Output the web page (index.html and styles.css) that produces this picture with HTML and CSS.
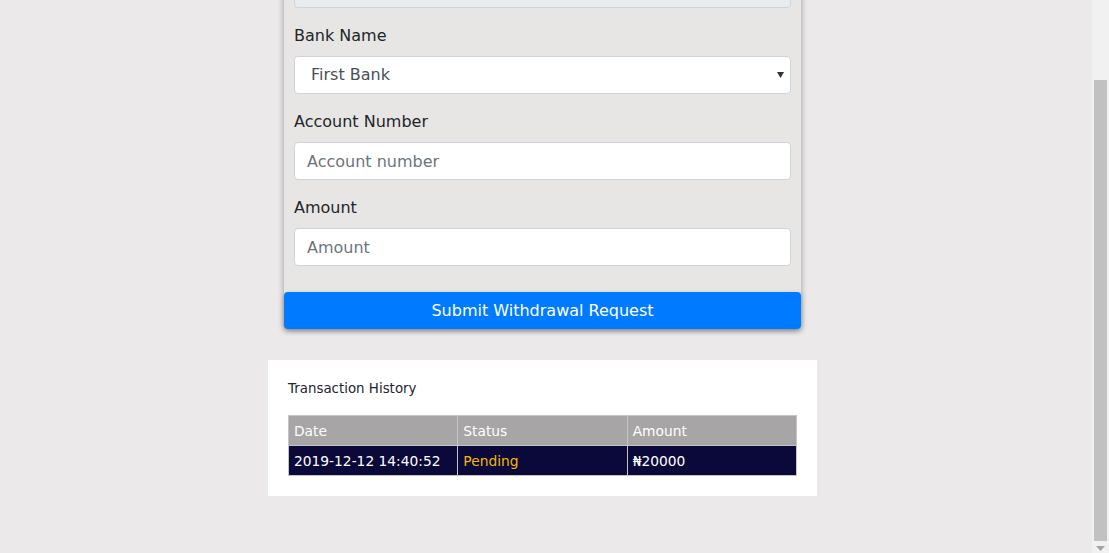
FILE: index.html
```html
<!DOCTYPE html>
<html>
<head>
<meta charset="utf-8">
<link rel="stylesheet" href="styles.css">
</head>
<body>
<div class="page">
  <div class="column">
    <form class="card">
      <div class="form-group">
        <input class="form-control readonly" type="text" readonly>
      </div>
      <div class="form-group">
        <label class="label">Bank Name</label>
        <div class="select-wrap">
          <select class="form-control select">
            <option>First Bank</option>
          </select>
          <svg class="caret" width="7" height="6" viewBox="0 0 7 6"><path d="M0 0H7L3.5 6Z" fill="#333"/></svg>
        </div>
      </div>
      <div class="form-group">
        <label class="label">Account Number</label>
        <input class="form-control" type="text" placeholder="Account number">
      </div>
      <div class="form-group last">
        <label class="label">Amount</label>
        <input class="form-control" type="text" placeholder="Amount">
      </div>
      <button class="btn" type="button">Submit Withdrawal Request</button>
    </form>

    <section class="history">
      <h2 class="history-title">Transaction History</h2>
      <table class="table">
        <thead>
          <tr><th>Date</th><th>Status</th><th>Amount</th></tr>
        </thead>
        <tbody>
          <tr><td>2019-12-12 14:40:52</td><td class="pending">Pending</td><td>₦20000</td></tr>
        </tbody>
      </table>
    </section>
  </div>
</div>
<div class="scrollbar">
  <div class="thumb"></div>
  <svg class="arrow" width="9" height="5" viewBox="0 0 9 5"><path d="M0 0H9L4.5 5Z" fill="#a3a3a3"/></svg>
</div>
</body>
</html>
```

FILE: styles.css
```css
html, body {
  margin: 0;
  padding: 0;
  background: #ebe9e9;
  font-family: "DejaVu Sans", Verdana, sans-serif;
  color: #212529;
  overflow: hidden;
  height: 553px;
}

.page {
  padding-left: 268px;
  margin-top: -30px;
}

.column {
  width: 549px;
  display: flex;
  flex-direction: column;
  align-items: center;
}

.card {
  width: 517px;
  box-sizing: border-box;
  background: #e8e6e4;
  padding: 0;
  margin: 0;
  box-shadow: 0 1px 6px rgba(0, 0, 0, 0.35);
  border-radius: 0 0 4px 4px;
  display: flex;
  flex-direction: column;
}

.form-group {
  padding: 0 10px;
  margin-bottom: 16px;
  display: flex;
  flex-direction: column;
}

.form-group.last {
  margin-bottom: 26px;
}

.label {
  font-size: 16px;
  line-height: 24px;
  margin-bottom: 8px;
  color: #212529;
}

.form-control {
  box-sizing: border-box;
  width: 100%;
  height: 38px;
  padding: 6px 12px;
  font-family: "DejaVu Sans", Verdana, sans-serif;
  font-size: 16px;
  line-height: 24px;
  color: #495057;
  background: #fff;
  border: 1px solid #ced4da;
  border-radius: 4px;
  outline: none;
  margin: 0;
}

.form-control::placeholder {
  color: #6c757d;
  opacity: 1;
}

.readonly {
  background: #e9ecef;
}

.select-wrap {
  position: relative;
}

.select {
  appearance: none;
  -webkit-appearance: none;
  padding-left: 16px;
}

.caret {
  position: absolute;
  right: 7px;
  top: 16px;
}

.btn {
  display: block;
  width: 100%;
  height: 37px;
  border: 0;
  border-radius: 4px;
  background: #007bff;
  color: #fff;
  font-family: "DejaVu Sans", Verdana, sans-serif;
  font-size: 16px;
  line-height: 24px;
  padding: 6px 12px;
  box-shadow: 0 2px 5px rgba(0, 0, 0, 0.25);
  margin: 0;
}

.history {
  width: 549px;
  box-sizing: border-box;
  background: #fff;
  margin-top: 31px;
  padding: 20px 20px 20px;
}

.history-title {
  margin: 0 0 17px;
  font-size: 13.4px;
  line-height: 18px;
  font-weight: normal;
  color: #212529;
}

.table {
  width: 100%;
  border-collapse: collapse;
  table-layout: fixed;
  font-size: 13.8px;
}

.table th, .table td {
  border: 1px solid #c4c4c4;
  text-align: left;
  padding: 0 5px;
  height: 29px;
  color: #fff;
}

.table th {
  background: #a7a5a5;
  font-weight: normal;
}

.table td {
  background: #0a0939;
}

.table td.pending {
  color: #f5b800;
}

.scrollbar {
  position: fixed;
  top: 0;
  right: 0;
  width: 17px;
  height: 553px;
  background: #f1f1f1;
}

.thumb {
  position: absolute;
  left: 2px;
  top: 80px;
  width: 13px;
  height: 461px;
  background: #c1c1c1;
}

.arrow {
  position: absolute;
  left: 4px;
  bottom: 2px;
}
```
